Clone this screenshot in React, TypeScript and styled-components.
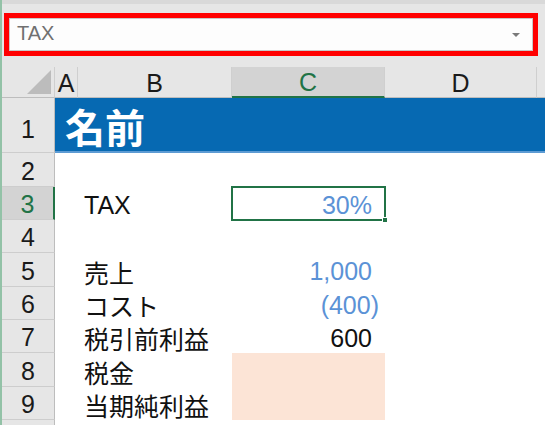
import React from "react";
import styled, { createGlobalStyle, css } from "styled-components";

const GlobalStyle = createGlobalStyle`
  html, body {
    margin: 0;
    padding: 0;
    background: #e6e6e6;
    overflow: hidden;
  }
`;

const FONT = `"Liberation Sans", "Noto Sans CJK JP", sans-serif`;
const GREEN = "#217346";

const Window = styled.div`
  width: 545px;
  height: 425px;
  box-sizing: border-box;
  border-left: 2px solid #93c2a7;
  background: linear-gradient(#d9d9d9 0, #d9d9d9 4px, #e6e6e6 4px);
  font-family: ${FONT};
  overflow: hidden;
  display: flex;
  flex-direction: column;
`;

const FormulaArea = styled.div`
  padding: 13px 0 11px 2px;
`;

const Highlight = styled.div`
  width: 534px;
  height: 43px;
  box-sizing: border-box;
  border: 5px solid #ff0000;
`;

const NameBox = styled.div`
  height: 100%;
  box-sizing: border-box;
  border: 1px solid #c8c8c8;
  background: #fdfdfd;
  display: flex;
  align-items: center;
  justify-content: space-between;
  padding: 0 12px 2px 7px;
  font-size: 20px;
  color: #707070;
`;

const DropArrow = styled.span`
  width: 0;
  height: 0;
  border-left: 4px solid transparent;
  border-right: 4px solid transparent;
  border-top: 4px solid #7a7a7a;
  margin-top: 2px;
`;

const Sheet = styled.div`
  display: grid;
  grid-template-columns: 53px 23px 154px 153px 152px 1fr;
  grid-template-rows: 31px 55px 34px 33px 33px 34px 33px 33px 34px 33px 33px;
  font-size: 25px;
  color: #111;
`;

const Corner = styled.div`
  position: relative;
  border-right: 1px solid #cfcfcf;
  border-bottom: 1px solid #bdbdbd;
  &::after {
    content: "";
    position: absolute;
    right: 3px;
    bottom: 3px;
    width: 0;
    height: 0;
    border-left: 24px solid transparent;
    border-bottom: 24px solid #bcbcbc;
  }
`;

const ColHeader = styled.div<{ $active?: boolean }>`
  display: flex;
  align-items: center;
  justify-content: center;
  padding-top: 2px;
  box-sizing: border-box;
  border-right: 1px solid #cfcfcf;
  border-bottom: 1px solid #bdbdbd;
  color: #1a1a1a;
  ${(p) =>
    p.$active &&
    css`
      background: #d3d3d3;
      color: ${GREEN};
      border-bottom: 2px solid ${GREEN};
    `}
`;

const Filler = styled.div`
  border-bottom: 1px solid #bdbdbd;
`;

const RowHeader = styled.div<{ $active?: boolean; $tall?: boolean }>`
  display: flex;
  align-items: center;
  justify-content: center;
  padding-top: ${(p) => (p.$tall ? 8 : 3)}px;
  box-sizing: border-box;
  background: #e6e6e6;
  border-right: 1px solid #bdbdbd;
  border-bottom: 1px solid #cdcdcd;
  color: #1a1a1a;
  ${(p) =>
    p.$active &&
    css`
      background: #d3d3d3;
      color: ${GREEN};
      border-right: 2px solid ${GREEN};
    `}
`;

const TitleBand = styled.div`
  grid-column: 2 / -1;
  background: #0669b2;
  border-bottom: 2px solid #5d9bd3;
  display: flex;
  align-items: center;
  padding: 2px 0 0 10px;
  color: #fff;
  font-size: 40px;
  font-weight: bold;
`;

const Cell = styled.div<{
  $align?: "left" | "right";
  $input?: boolean;
  $fill?: boolean;
  $selected?: boolean;
  $hang?: boolean;
}>`
  position: relative;
  background: ${(p) => (p.$fill ? "#fce4d6" : "#fff")};
  display: flex;
  align-items: center;
  justify-content: ${(p) => (p.$align === "right" ? "flex-end" : "flex-start")};
  padding: 3px ${(p) => (p.$hang ? 6 : 13)}px 0 6px;
  color: ${(p) => (p.$input ? "#5b92d6" : "#111")};
  white-space: nowrap;
  ${(p) =>
    p.$selected &&
    css`
      z-index: 1;
      box-shadow: 0 0 0 1px ${GREEN}, inset 0 0 0 1px ${GREEN};
      &::after {
        content: "";
        position: absolute;
        right: -3px;
        bottom: -3px;
        width: 6px;
        height: 6px;
        background: ${GREEN};
        border: 1px solid #fff;
        box-sizing: border-box;
      }
    `}
`;

const Label = styled.span`
  font-size: 25px;
`;

type Row = {
  n: number;
  label?: string;
  value?: string;
  input?: boolean;
  negative?: boolean;
  fill?: boolean;
  selected?: boolean;
};

const rows: Row[] = [
  { n: 2 },
  { n: 3, label: "TAX", value: "30%", input: true, selected: true },
  { n: 4 },
  { n: 5, label: "売上", value: "1,000", input: true },
  { n: 6, label: "コスト", value: "(400)", input: true, negative: true },
  { n: 7, label: "税引前利益", value: "600" },
  { n: 8, label: "税金", fill: true },
  { n: 9, label: "当期純利益", fill: true },
];

const columns = ["A", "B", "C", "D"];

export default function App() {
  return (
    <>
      <GlobalStyle />
      <Window>
        <FormulaArea>
          <Highlight>
            <NameBox>
              <span>TAX</span>
              <DropArrow />
            </NameBox>
          </Highlight>
        </FormulaArea>
        <Sheet>
          <Corner />
          {columns.map((c) => (
            <ColHeader key={c} $active={c === "C"}>
              {c}
            </ColHeader>
          ))}
          <Filler />

          <RowHeader $tall>1</RowHeader>
          <TitleBand>名前</TitleBand>

          {rows.map((r) => (
            <React.Fragment key={r.n}>
              <RowHeader $active={r.selected}>{r.n}</RowHeader>
              <Cell />
              <Cell>{r.label && <Label>{r.label}</Label>}</Cell>
              <Cell
                $align="right"
                $input={r.input}
                $fill={r.fill}
                $selected={r.selected}
                $hang={r.negative}
              >
                {r.value}
              </Cell>
              <Cell />
              <Cell />
            </React.Fragment>
          ))}

          {/* row 10 peeks in at the bottom edge */}
          <RowHeader />
          <Cell />
          <Cell />
          <Cell />
          <Cell />
          <Cell />
        </Sheet>
      </Window>
    </>
  );
}
